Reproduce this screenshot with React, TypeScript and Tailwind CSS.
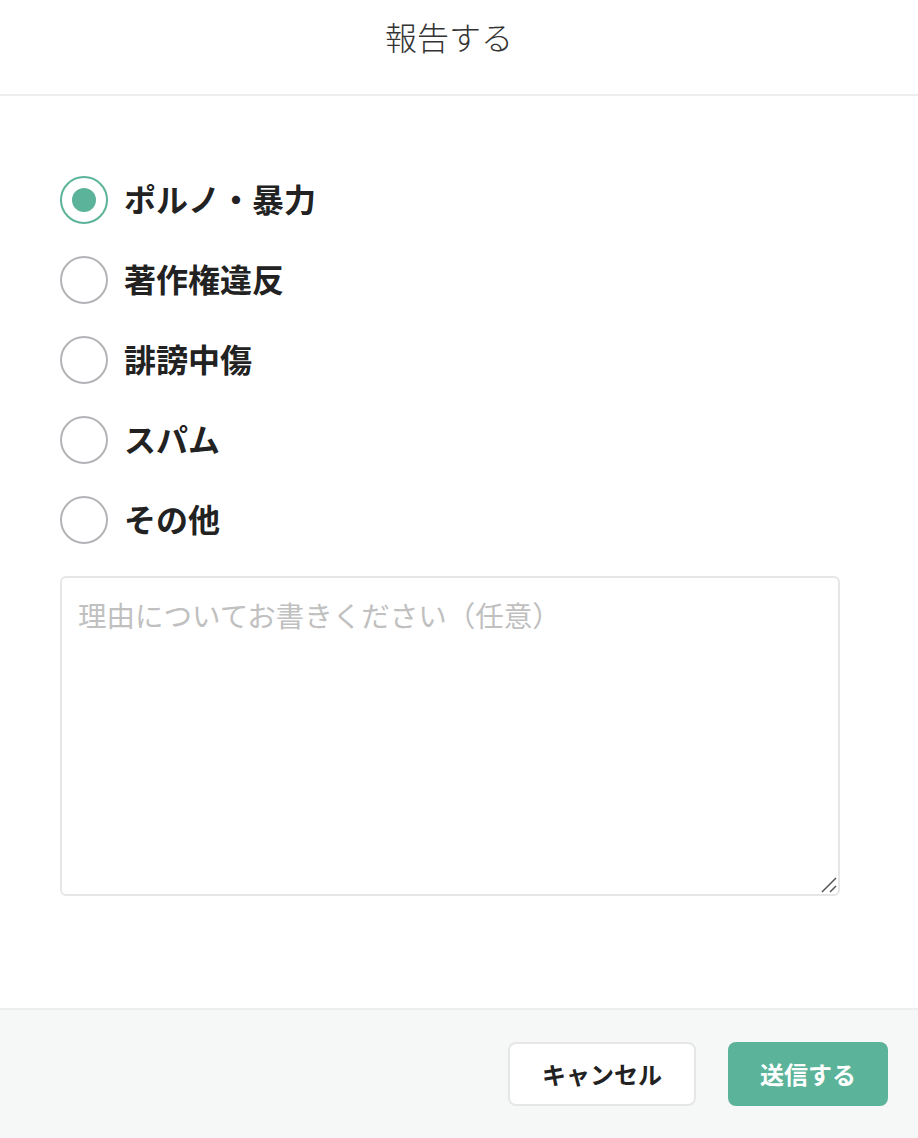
import { useState } from "react";

const OPTIONS = ["ポルノ・暴力", "著作権違反", "誹謗中傷", "スパム", "その他"];

const FONT = "font-['Noto_Sans_CJK_JP','Noto_Sans',sans-serif]";

function Radio({ label, checked, onSelect }: { label: string; checked: boolean; onSelect: () => void }) {
  return (
    <label className="flex items-center h-12 cursor-pointer" onClick={onSelect}>
      <span
        className={
          checked
            ? "w-12 h-12 rounded-full border-2 border-[#5bb39a] flex items-center justify-center shrink-0"
            : "w-12 h-12 rounded-full border-2 border-[#b3b3b8] flex items-center justify-center shrink-0"
        }
      >
        {checked && <span className="w-6 h-6 rounded-full bg-[#5bb39a]" />}
      </span>
      <span className="ml-4 -mt-1 text-[32px] font-bold text-[#222] leading-none">{label}</span>
    </label>
  );
}

export default function App() {
  const [selected, setSelected] = useState(0);
  return (
    <div className={`${FONT} w-[918px] h-[1138px] bg-white flex flex-col`}>
      <header className="h-[96px] border-b-2 border-[#eeeeee] flex items-start justify-center pt-[14px] pr-[20px]">
        <h1 className="text-[32px] font-light text-[#333] leading-[44px]">報告する</h1>
      </header>

      <main className="flex-1 px-[60px] pt-[80px]">
        <div className="flex flex-col gap-8">
          {OPTIONS.map((o, i) => (
            <Radio key={o} label={o} checked={selected === i} onSelect={() => setSelected(i)} />
          ))}
        </div>
        <div className="relative mt-8 w-[780px] h-[320px]">
          <textarea
            className="block w-full h-full resize-none border-2 border-[#e6e6e6] rounded-md px-4 py-[19px] text-[28.5px] leading-[36px] text-[#333] placeholder:text-[#c0c0c0] outline-none"
            placeholder="理由についてお書きください（任意）"
          />
          <svg className="absolute right-[3px] bottom-[3px] w-4 h-4" viewBox="0 0 16 16">
            <path d="M1 15L15 1M9 15L15 9" stroke="#555" strokeWidth="1.5" fill="none" />
          </svg>
        </div>
      </main>

      <footer className="h-[130px] border-t-2 border-[#eeeeee] bg-[#f6f7f7] flex items-start justify-end gap-8 pt-8 pr-[30px]">
        <button
          type="button"
          className="w-[188px] h-16 bg-white border-2 border-[#e6e6e6] rounded-lg text-[24px] font-bold text-[#222]"
        >
          キャンセル
        </button>
        <button
          type="button"
          className="w-[160px] h-16 bg-[#5bb39a] rounded-lg text-[24px] font-bold text-white"
        >
          送信する
        </button>
      </footer>
    </div>
  );
}
